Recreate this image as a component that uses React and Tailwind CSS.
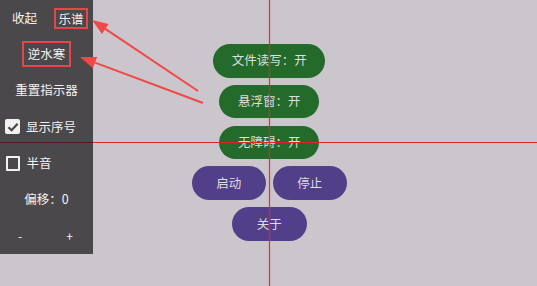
import React from "react";

const font = { fontFamily: '"Noto Sans CJK SC", "Noto Sans", sans-serif' };

function Btn({ w, color, children }) {
  return (
    <div
      className={`h-[33.5px] rounded-full flex items-center justify-center text-[12.5px] text-[#dedede] ${w} ${color}`}
    >
      {children}
    </div>
  );
}

export default function App() {
  const green = "bg-[#246a2a]";
  const purple = "bg-[#523f8a]";
  return (
    <div
      className="relative w-[537px] h-[286px] overflow-hidden bg-[#cbc6cb]"
      style={font}
    >
      {/* main buttons */}
      <div className="flex flex-col items-center gap-[7.3px] pt-[44px] pl-[1.5px]">
        <Btn w="w-[112px]" color={green}>文件读写：开</Btn>
        <Btn w="w-[100px]" color={green}>悬浮窗：开</Btn>
        <Btn w="w-[100px]" color={green}>无障碍：开</Btn>
        <div className="flex gap-[7px]">
          <Btn w="w-[74px]" color={purple}>启动</Btn>
          <Btn w="w-[74px]" color={purple}>停止</Btn>
        </div>
        <Btn w="w-[75px]" color={purple}>关于</Btn>
      </div>

      {/* crosshair */}
      <div className="absolute left-[268.5px] top-0 h-full w-px bg-[#e02424]/90 shadow-[0_0_1.5px_rgba(235,60,60,0.7)]" />
      <div className="absolute left-0 top-[141.5px] w-full h-px bg-[#dc2626]" />

      {/* floating panel */}
      <div className="absolute left-0 top-0 w-[93px] h-[254px] bg-[rgba(20,18,20,0.7)] text-[#f2f2f2] text-[12.5px] flex flex-col">
        <div className="h-[36.5px] flex items-center justify-between pl-[12px] pr-[5px]">
          <span>收起</span>
          <span className="border-2 border-[#e34848] px-[2.5px] leading-[17px]">乐谱</span>
        </div>
        <div className="h-[36.5px] flex items-center justify-center">
          <span className="border-2 border-[#e34848] px-[4px] py-[2px] leading-[18px]">逆水寒</span>
        </div>
        <div className="h-[36.5px] flex items-center justify-center">
          <span>重置指示器</span>
        </div>
        <div className="h-[36.5px] flex items-center pl-[5px] gap-[6px]">
          <span className="w-[15px] h-[15px] rounded-[2px] bg-[#f2f2f2] flex items-center justify-center">
            <svg width="12" height="12" viewBox="0 0 12 12">
              <path d="M1.5 6.2 L4.6 9.2 L10.6 2.8" fill="none" stroke="#4a484a" strokeWidth="2.2" />
            </svg>
          </span>
          <span>显示序号</span>
        </div>
        <div className="h-[36.5px] flex items-center pl-[5.5px] gap-[6.5px]">
          <span className="w-[14.5px] h-[14.5px] rounded-[1px] border-2 border-[#f2f2f2]" />
          <span>半音</span>
        </div>
        <div className="h-[36.5px] flex items-center justify-center">
          <span>偏移：0</span>
        </div>
        <div className="h-[36.5px] flex items-center justify-between pl-[18px] pr-[20px] text-[12px]">
          <span>-</span>
          <span>+</span>
        </div>
      </div>

      {/* annotation arrows */}
      <svg className="absolute left-0 top-0" width="537" height="286">
        <line x1="198" y1="91" x2="105.3" y2="28.9" stroke="#f04848" strokeWidth="2" />
        <polygon points="92,20 108.6,23.9 102,33.9" fill="#f04848" />
        <line x1="203" y1="103" x2="95" y2="62.6" stroke="#f04848" strokeWidth="2" />
        <polygon points="80,57 97.1,57 92.9,68.2" fill="#f04848" />
      </svg>
    </div>
  );
}
